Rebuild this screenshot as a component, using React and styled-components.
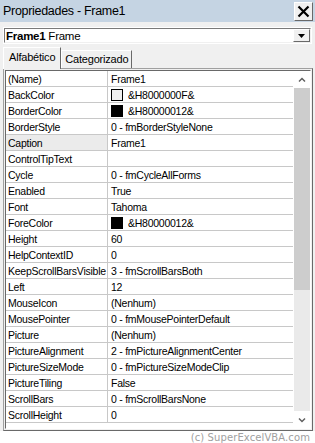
import React from 'react';
import styled, { createGlobalStyle } from 'styled-components';

const GlobalStyle = createGlobalStyle`
	html, body {
		margin: 0;
		padding: 0;
		background: #ffffff;
	}
	body {
		font-family: 'Liberation Sans', Arial, sans-serif;
		font-size: 10.5px;
		letter-spacing: -0.25px;
		color: #000;
	}
`;

const props = [
	{ name: '(Name)', value: 'Frame1' },
	{ name: 'BackColor', value: '&H8000000F&', swatch: '#f0f0f0' },
	{ name: 'BorderColor', value: '&H80000012&', swatch: '#000' },
	{ name: 'BorderStyle', value: '0 - fmBorderStyleNone' },
	{ name: 'Caption', value: 'Frame1', selected: true },
	{ name: 'ControlTipText', value: '' },
	{ name: 'Cycle', value: '0 - fmCycleAllForms' },
	{ name: 'Enabled', value: 'True' },
	{ name: 'Font', value: 'Tahoma' },
	{ name: 'ForeColor', value: '&H80000012&', swatch: '#000' },
	{ name: 'Height', value: '60' },
	{ name: 'HelpContextID', value: '0' },
	{ name: 'KeepScrollBarsVisible', value: '3 - fmScrollBarsBoth' },
	{ name: 'Left', value: '12' },
	{ name: 'MouseIcon', value: '(Nenhum)' },
	{ name: 'MousePointer', value: '0 - fmMousePointerDefault' },
	{ name: 'Picture', value: '(Nenhum)' },
	{ name: 'PictureAlignment', value: '2 - fmPictureAlignmentCenter' },
	{ name: 'PictureSizeMode', value: '0 - fmPictureSizeModeClip' },
	{ name: 'PictureTiling', value: 'False' },
	{ name: 'ScrollBars', value: '0 - fmScrollBarsNone' },
	{ name: 'ScrollHeight', value: '0' },
];

const Window = styled.div`
	width: 315px;
	background: #f0f0f0;
`;

const TitleBar = styled.div`
	height: 22px;
	background: #c5d4e3;
	display: flex;
	align-items: center;
	justify-content: space-between;
	padding: 0 2px 0 3px;
	box-sizing: border-box;
`;

const Title = styled.span`
	font-size: 12.5px;
	letter-spacing: -0.3px;
	margin-top: -1px;
`;

const CloseButton = styled.div`
	width: 19px;
	height: 19px;
	box-sizing: border-box;
	background: #f0f0f0;
	border: 1px solid;
	border-color: #fff #696969 #696969 #fff;
	display: flex;
	align-items: center;
	justify-content: center;
	margin-top: 1px;
`;

const Body = styled.div`
	padding: 5px 2px 0 3px;
`;

const ObjectSelect = styled.div`
	height: 17px;
	box-sizing: border-box;
	border: 2px solid;
	border-color: #7a7a7a #f0f0f0 #f0f0f0 #7a7a7a;
	outline: 1px solid #fff;
	outline-offset: -1px;
	background: #fff;
	display: flex;
	align-items: center;
	font-size: 11.5px;
	padding-left: 1px;
	margin-right: 1px;
`;

const SelectText = styled.span`
	flex: 1;
	white-space: nowrap;

	b {
		font-weight: bold;
	}
`;

const DropButton = styled.div`
	width: 17px;
	height: 13px;
	box-sizing: border-box;
	background: #f0f0f0;
	border: 1px solid;
	border-color: #fff #696969 #696969 #fff;
	display: flex;
	align-items: center;
	justify-content: center;
`;

const Tabs = styled.div`
	display: flex;
	align-items: flex-end;
	height: 21px;
	margin-top: 3px;
	position: relative;
	z-index: 1;
`;

const Tab = styled.div`
	box-sizing: border-box;
	height: ${({ active }) => (active ? '22px' : '18px')};
	padding: ${({ active }) => (active ? '3px 5px 0 5px' : '2px 3px 0 3px')};
	font-size: 11px;
	letter-spacing: -0.2px;
	background: #f0f0f0;
	border: 1px solid;
	border-color: #fff #696969 transparent #fff;
	border-bottom: none;
	margin-bottom: ${({ active }) => (active ? '-1px' : '0')};
	white-space: nowrap;
`;

const Frame = styled.div`
	display: flex;
	height: 363px;
	box-sizing: border-box;
	border: 1px solid;
	border-color: #a0a0a0 #696969 #696969 #a0a0a0;
	padding: 1px;
	width: 310px;
`;

const Inner = styled.div`
	flex: 1;
	display: flex;
	border: 1px solid;
	border-color: #696969 #fff #fff #696969;
	background: #fff;
	overflow: hidden;
`;

const Grid = styled.div`
	flex: 1;
	overflow: hidden;
`;

const Row = styled.div`
	display: grid;
	grid-template-columns: 102px 1fr;
	height: 16px;
	box-sizing: border-box;
	border-bottom: 1px solid #c8c8c8;
`;

const Cell = styled.div`
	display: flex;
	align-items: center;
	gap: 5px;
	padding-left: ${({ label }) => (label ? '2px' : '3px')};
	background: ${({ selected }) => (selected ? '#ebebeb' : '#fff')};
	border-right: ${({ label }) => (label ? '1px solid #c8c8c8' : 'none')};
	white-space: nowrap;
	overflow: hidden;
`;

const Swatch = styled.span`
	width: 12px;
	height: 12px;
	box-sizing: border-box;
	border: 1px solid #000;
	background: ${({ color }) => color};
	flex: none;
`;

const ScrollBar = styled.div`
	width: 16px;
	display: flex;
	flex-direction: column;
	background: #eaeaea;
	border-left: 1px solid #fff;
`;

const ArrowBtn = styled.div`
	height: 17px;
	background: #fff;
	display: flex;
	align-items: center;
	justify-content: center;
	flex: none;
`;

const Thumb = styled.div`
	height: 202px;
	background: #cdcdcd;
	flex: none;
`;

const Track = styled.div`
	flex: 1;
`;

const Footer = styled.div`
	text-align: right;
	padding: 1px 5px 0 0;
	font-family: 'DejaVu Sans', sans-serif;
	font-size: 10px;
	line-height: 11px;
	letter-spacing: 0.1px;
	color: #a0a0a0;
`;

const Chevron = ({ down }) => (
	<svg width="8" height="6" viewBox="0 0 8 6">
		<path
			d={down ? 'M1 1.5 L4 4.5 L7 1.5' : 'M1 4.5 L4 1.5 L7 4.5'}
			fill="none"
			stroke="#606060"
			strokeWidth="1.5"
		/>
	</svg>
);

const App = () => {
	return (
		<>
			<GlobalStyle />
			<Window>
				<TitleBar>
					<Title>Propriedades - Frame1</Title>
					<CloseButton>
						<svg width="13" height="13" viewBox="0 0 13 13">
							<path d="M1.5 1.5 L11.5 11.5 M11.5 1.5 L1.5 11.5" stroke="#000" strokeWidth="2.2" />
						</svg>
					</CloseButton>
				</TitleBar>
				<Body>
					<ObjectSelect>
						<SelectText>
							<b>Frame1</b> Frame
						</SelectText>
						<DropButton>
							<svg width="7" height="4" viewBox="0 0 7 4">
								<path d="M0 0 H7 L3.5 4 Z" fill="#000" />
							</svg>
						</DropButton>
					</ObjectSelect>
					<Tabs>
						<Tab active>Alfabético</Tab>
						<Tab>Categorizado</Tab>
					</Tabs>
					<Frame>
						<Inner>
							<Grid>
								{props.map((p) => (
									<Row key={p.name}>
										<Cell label selected={p.selected}>{p.name}</Cell>
										<Cell>
											{p.swatch && <Swatch color={p.swatch} />}
											{p.value}
										</Cell>
									</Row>
								))}
							</Grid>
							<ScrollBar>
								<ArrowBtn>
									<Chevron />
								</ArrowBtn>
								<Thumb />
								<Track />
								<ArrowBtn>
									<Chevron down />
								</ArrowBtn>
							</ScrollBar>
						</Inner>
					</Frame>
				</Body>
			</Window>
			<Footer>(c) SuperExcelVBA.com</Footer>
		</>
	);
};

export default App;
